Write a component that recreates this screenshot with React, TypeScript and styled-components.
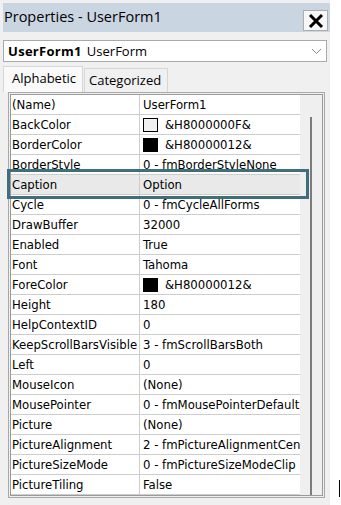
import React from "react";
import styled, { createGlobalStyle } from "styled-components";

const GlobalStyle = createGlobalStyle`
  html, body {
    margin: 0;
    padding: 0;
    background: #ffffff;
  }
  * {
    box-sizing: border-box;
  }
`;

// property rows of the grid, swatch is the colour chip shown before the value
const properties = [
  { name: "(Name)", value: "UserForm1" },
  { name: "BackColor", value: "&H8000000F&", swatch: "#f0f0f0" },
  { name: "BorderColor", value: "&H80000012&", swatch: "#000000" },
  { name: "BorderStyle", value: "0 - fmBorderStyleNone" },
  { name: "Caption", value: "Option", selected: true },
  { name: "Cycle", value: "0 - fmCycleAllForms" },
  { name: "DrawBuffer", value: "32000" },
  { name: "Enabled", value: "True" },
  { name: "Font", value: "Tahoma" },
  { name: "ForeColor", value: "&H80000012&", swatch: "#000000" },
  { name: "Height", value: "180" },
  { name: "HelpContextID", value: "0" },
  { name: "KeepScrollBarsVisible", value: "3 - fmScrollBarsBoth" },
  { name: "Left", value: "0" },
  { name: "MouseIcon", value: "(None)" },
  { name: "MousePointer", value: "0 - fmMousePointerDefault" },
  { name: "Picture", value: "(None)" },
  { name: "PictureAlignment", value: "2 - fmPictureAlignmentCenter" },
  { name: "PictureSizeMode", value: "0 - fmPictureSizeModeClip" },
  { name: "PictureTiling", value: "False" },
];

const Page = styled.div`
  position: relative;
  width: 341px;
  height: 505px;
  overflow: hidden;
  background: #ffffff;
`;

const Window = styled.div`
  width: 330px;
  height: 505px;
  padding: 3px 0 0 3px;
  background: #f0f0f0;
  display: flex;
  flex-direction: column;
  font-family: "Open Sans", "Noto Sans", sans-serif;
  color: #000;
`;

const TitleBar = styled.div`
  width: 327px;
  height: 29px;
  background: #cad5e2;
  display: flex;
  align-items: center;
  justify-content: space-between;
  padding: 0 2px 0 1px;
`;

const Title = styled.span`
  font-size: 14.5px;
  line-height: 20px;
  margin-top: -1px;
`;

const CloseButton = styled.button`
  width: 25px;
  height: 21px;
  margin-top: 6px;
  padding: 0;
  border: 1px solid #adadad;
  background: #f7f7f7;
  display: flex;
  align-items: center;
  justify-content: center;
`;

const Dropdown = styled.div`
  width: 324px;
  height: 22px;
  margin-top: 8px;
  background: #ffffff;
  border: 1px solid #a9a9a9;
  display: flex;
  align-items: center;
  justify-content: space-between;
  padding: 0 4px 0 4px;
  font-size: 13px;
`;

const ObjectName = styled.b`
  font-weight: 700;
  letter-spacing: 0.3px;
  margin-right: 5px;
`;

const TabStrip = styled.div`
  display: flex;
  align-items: flex-end;
  height: 26px;
  margin-top: 4px;
`;

const Tab = styled.div<{ $active?: boolean }>`
  height: ${(p) => (p.$active ? 26 : 24)}px;
  padding: 0 ${(p) => (p.$active ? 8 : 4)}px;
  width: ${(p) => (p.$active ? 80 : 84)}px;
  margin-left: ${(p) => (p.$active ? 0 : 1)}px;
  background: ${(p) => (p.$active ? "#f9f9f9" : "#f0f0f0")};
  border: 1px solid #d6d6d6;
  border-bottom: none;
  font-size: 13px;
  line-height: 22px;
`;

const GridFrame = styled.div`
  position: relative;
  width: 317px;
  margin-left: 5px;
  border: 1px solid #a8a8a8;
  padding: 1px;
  background: #f0f0f0;
`;

const GridInner = styled.div`
  display: flex;
  border: 1px solid #9a9a9a;
  background: #ffffff;
`;

const Rows = styled.div`
  width: 289px;
  display: flex;
  flex-direction: column;
  font-family: "DejaVu Sans Condensed", "DejaVu Sans", sans-serif;
  font-size: 13px;
`;

const Row = styled.div<{ $selected?: boolean }>`
  display: flex;
  height: 20px;
  border-bottom: 1px solid #cdcdcd;
  background: ${(p) => (p.$selected ? "#e9e9e9" : "#ffffff")};
`;

const NameCell = styled.div`
  width: 129px;
  border-right: 1px solid #cdcdcd;
  padding-left: 1px;
  line-height: 19px;
  white-space: nowrap;
  overflow: hidden;
`;

const ValueCell = styled.div`
  flex: 1;
  display: flex;
  align-items: center;
  gap: 7px;
  padding-left: 3px;
  line-height: 19px;
  white-space: nowrap;
  overflow: hidden;
`;

const Swatch = styled.span<{ $color: string }>`
  width: 15px;
  height: 14px;
  flex: none;
  background: ${(p) => p.$color};
  border: 1px solid #000;
`;

const ScrollStrip = styled.div`
  flex: 1;
  background: #efefef;
  padding: 22px 0 0 10px;
`;

const ScrollLine = styled.div`
  width: 2px;
  height: 100%;
  background: #7c7c7c;
`;

const Highlight = styled.div`
  position: absolute;
  left: -2px;
  top: 76px;
  width: 302px;
  height: 30px;
  border: 3px solid #3f6f7c;
  pointer-events: none;
`;

const Caret = styled.div`
  position: absolute;
  left: 339px;
  top: 480px;
  width: 1px;
  height: 17px;
  background: #000;
`;

export default function App() {
  return (
    <Page>
      <GlobalStyle />
      <Window>
        <TitleBar>
          <Title>Properties - UserForm1</Title>
          <CloseButton>
            <svg width="16" height="16" viewBox="0 0 16 16">
              <path d="M2 2 L14 14 M14 2 L2 14" stroke="#000" strokeWidth="3" />
            </svg>
          </CloseButton>
        </TitleBar>

        <Dropdown>
          <span>
            <ObjectName>UserForm1</ObjectName>UserForm
          </span>
          <svg width="11" height="7" viewBox="0 0 11 7">
            <path d="M1 1 L5.5 5.5 L10 1" fill="none" stroke="#8a8a8a" strokeWidth="1" />
          </svg>
        </Dropdown>

        <TabStrip>
          <Tab $active>Alphabetic</Tab>
          <Tab>Categorized</Tab>
        </TabStrip>

        <GridFrame>
          <GridInner>
            <Rows>
              {properties.map((p) => (
                <Row key={p.name} $selected={p.selected}>
                  <NameCell>{p.name}</NameCell>
                  <ValueCell>
                    {p.swatch && <Swatch $color={p.swatch} />}
                    <span>{p.value}</span>
                  </ValueCell>
                </Row>
              ))}
            </Rows>
            <ScrollStrip>
              <ScrollLine />
            </ScrollStrip>
          </GridInner>
          <Highlight />
        </GridFrame>
      </Window>
      <Caret />
    </Page>
  );
}
